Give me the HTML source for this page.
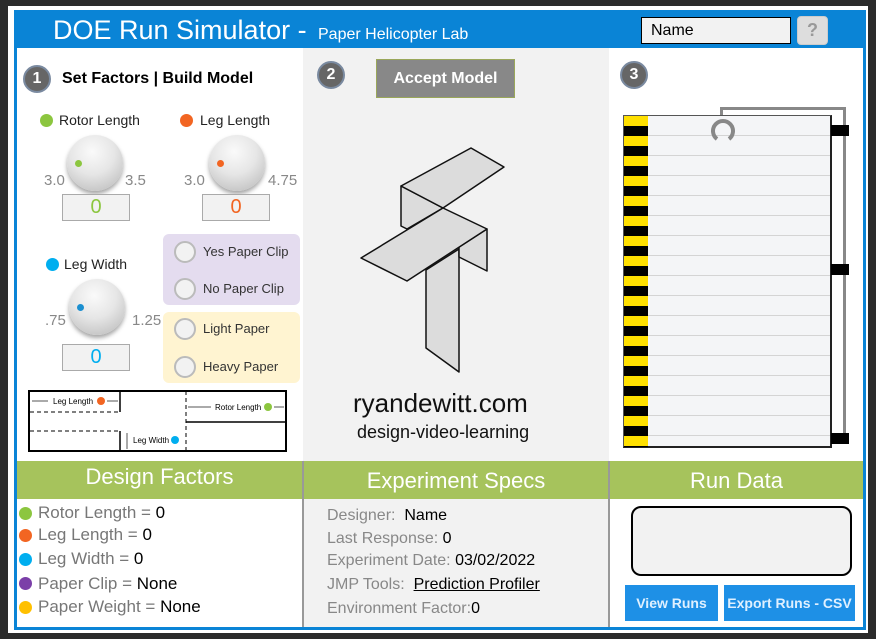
<!DOCTYPE html>
<html><head><meta charset="utf-8"><style>
*{margin:0;padding:0;box-sizing:border-box}
body{width:876px;height:639px;background:#2b2b2b;position:relative;overflow:hidden;font-family:"Liberation Sans",sans-serif}
.a{position:absolute}
.t{position:absolute;white-space:nowrap}
.dot{position:absolute;width:13px;height:13px;border-radius:50%}
.knob{position:absolute;width:56px;height:56px;border-radius:50%;background:radial-gradient(circle at 45% 30%,#fafafa 0%,#e6e6e6 45%,#b5b5b5 100%);box-shadow:0 3px 4px rgba(0,0,0,.35)}
.kd{position:absolute;width:7px;height:7px;border-radius:50%}
.vb{position:absolute;width:68px;height:27px;background:#f2f2f2;border:1px solid #aaa;text-align:center;font-size:20px;line-height:25px}
.rad{position:absolute;width:22px;height:22px;border-radius:50%;background:#f2f2f2;border:2px solid #bbb}
.sc{position:absolute;color:#888;font-size:15px}
.num{position:absolute;width:28px;height:28px;border-radius:50%;background:#666;border:2px solid #7a8aa0;color:#fff;font-weight:bold;font-size:16px;text-align:center;line-height:24px}
.df{position:absolute;left:38px;font-size:17px;color:#777}
.df b{font-weight:normal;color:#000}
.es{position:absolute;left:327px;font-size:16px;color:#888}
.es b{font-weight:normal;color:#000}
</style></head><body>
<div class="a" style="left:8px;top:6px;width:860px;height:627px;background:#fff"></div>
<div class="a" style="left:14px;top:10px;width:852px;height:620px;border:3px solid #0a84d6;background:#fff"></div>
<div class="a" style="left:14px;top:10px;width:852px;height:38px;background:#0a84d6"></div>
<div class="t" style="left:53px;top:15px;font-size:27px;color:#fff">DOE Run Simulator -</div>
<div class="t" style="left:318px;top:26px;font-size:16px;color:#fff">Paper Helicopter Lab</div>
<div class="a" style="left:641px;top:17px;width:150px;height:27px;background:#f2f2f2;border:1px solid #000;font-size:16px;padding-left:9px;line-height:25px">Name</div>
<div class="a" style="left:797px;top:16px;width:31px;height:29px;background:#ddd;border:1px solid #ccc;border-radius:4px;text-align:center;color:#999;font-weight:bold;font-size:18px;line-height:27px">?</div>

<div class="a" style="left:303px;top:48px;width:306px;height:579px;background:#f2f2f2"></div>
<div class="a" style="left:302px;top:461px;width:2px;height:166px;background:#999"></div>
<div class="a" style="left:608px;top:461px;width:2px;height:166px;background:#999"></div>
<div class="a" style="left:17px;top:461px;width:846px;height:38px;background:#a6c35c"></div>
<div class="a" style="left:302px;top:461px;width:2px;height:38px;background:#999"></div>
<div class="a" style="left:608px;top:461px;width:2px;height:38px;background:#999"></div>

<div class="num" style="left:23px;top:65px">1</div>
<div class="t" style="left:62px;top:70px;font-size:16px;font-weight:bold">Set Factors | Build Model</div>
<div class="dot" style="left:40px;top:114px;background:#8cc63f"></div>
<div class="t" style="left:59px;top:112px;font-size:14px;color:#222">Rotor Length</div>
<div class="dot" style="left:180px;top:114px;background:#f26522"></div>
<div class="t" style="left:200px;top:112px;font-size:14px;color:#222">Leg Length</div>
<div class="knob" style="left:67px;top:135px"><div class="kd" style="left:8px;top:25px;background:#8cc63f"></div></div>
<div class="knob" style="left:209px;top:135px"><div class="kd" style="left:8px;top:25px;background:#f26522"></div></div>
<div class="sc" style="left:44px;top:172px">3.0</div><div class="sc" style="left:125px;top:172px">3.5</div>
<div class="sc" style="left:184px;top:172px">3.0</div><div class="sc" style="left:268px;top:172px">4.75</div>
<div class="vb" style="left:62px;top:194px;color:#8cc63f">0</div>
<div class="vb" style="left:202px;top:194px;color:#f26522">0</div>
<div class="dot" style="left:46px;top:258px;background:#00aeef"></div>
<div class="t" style="left:64px;top:256px;font-size:14px;color:#222">Leg Width</div>
<div class="knob" style="left:69px;top:279px"><div class="kd" style="left:8px;top:25px;background:#1b8fd0"></div></div>
<div class="sc" style="left:45px;top:312px">.75</div><div class="sc" style="left:132px;top:312px">1.25</div>
<div class="vb" style="left:62px;top:344px;color:#00aeef">0</div>
<div class="a" style="left:163px;top:234px;width:137px;height:71px;background:#e4dcef;border-radius:6px"></div>
<div class="a" style="left:163px;top:312px;width:137px;height:71px;background:#fff4d1;border-radius:6px"></div>
<div class="rad" style="left:174px;top:241px"></div><div class="t" style="left:203px;top:244px;font-size:13px;color:#333">Yes Paper Clip</div>
<div class="rad" style="left:174px;top:278px"></div><div class="t" style="left:203px;top:281px;font-size:13px;color:#333">No Paper Clip</div>
<div class="rad" style="left:174px;top:318px"></div><div class="t" style="left:203px;top:321px;font-size:13px;color:#333">Light Paper</div>
<div class="rad" style="left:174px;top:356px"></div><div class="t" style="left:203px;top:359px;font-size:13px;color:#333">Heavy Paper</div>
<svg class="a" style="left:28px;top:390px" width="260" height="63">
<rect x="1" y="1" width="257" height="60" fill="#fff" stroke="#000" stroke-width="2"/>
<line x1="92" y1="1" x2="92" y2="22" stroke="#000" stroke-width="1.5"/>
<line x1="2" y1="22" x2="92" y2="22" stroke="#000" stroke-dasharray="4,3"/>
<line x1="2" y1="41" x2="92" y2="41" stroke="#000" stroke-dasharray="4,3"/>
<line x1="92" y1="41" x2="92" y2="62" stroke="#000" stroke-width="1.5"/>
<line x1="158" y1="1" x2="158" y2="62" stroke="#000" stroke-dasharray="4,3"/>
<line x1="158" y1="32" x2="258" y2="32" stroke="#000" stroke-width="1.5"/>
<text x="25" y="14" font-size="8" font-family="Liberation Sans">Leg Length</text>
<circle cx="73" cy="11" r="4" fill="#f26522"/>
<text x="187" y="20" font-size="8" font-family="Liberation Sans">Rotor Length</text>
<circle cx="240" cy="17" r="4" fill="#8cc63f"/>
<text x="105" y="53" font-size="8" font-family="Liberation Sans">Leg Width</text>
<circle cx="147" cy="50" r="4" fill="#00aeef"/>
<line x1="4" y1="11" x2="20" y2="11" stroke="#555"/><line x1="79" y1="11" x2="90" y2="11" stroke="#555"/>
<line x1="160" y1="17" x2="183" y2="17" stroke="#555"/><line x1="246" y1="17" x2="256" y2="17" stroke="#555"/>
<line x1="99" y1="43" x2="99" y2="59" stroke="#555"/>
</svg>

<div class="num" style="left:317px;top:61px">2</div>
<div class="a" style="left:376px;top:59px;width:139px;height:39px;background:#888;border:1px solid #9aa75a;color:#fff;font-weight:bold;font-size:16px;text-align:center;line-height:37px">Accept Model</div>
<svg class="a" style="left:0;top:0" width="876" height="639">
<g fill="#dcdcdc" stroke="#111" stroke-width="1.5" stroke-linejoin="round">
<polygon points="401,186 443,208 407,229 401,226"/>
<polygon points="401,186 471,148 504,167 443,208"/>
<polygon points="426,270 459,249 459,372 426,348"/>
<polygon points="459,247 487,229 487,271 459,257"/>
<polygon points="361,258 443,208 487,229 407,281"/>
</g>
</svg>
<div class="t" style="left:353px;top:388px;font-size:26px;color:#111">ryandewitt.com</div>
<div class="t" style="left:357px;top:422px;font-size:18px;color:#111">design-video-learning</div>

<div class="num" style="left:620px;top:61px">3</div>
<div class="a" style="left:720px;top:107px;width:126px;height:333px;border:3px solid #888;border-left:none;border-bottom:none"></div>
<div class="a" style="left:720px;top:107px;width:3px;height:12px;background:#888"></div>
<div class="a" style="left:623px;top:115px;width:209px;height:333px;background:#f4f5f7;border:1px solid #555;border-right:2px solid #222;border-bottom:2px solid #222;background-image:repeating-linear-gradient(to bottom,transparent 0,transparent 19px,#d4d4d4 19px,#d4d4d4 20px)"></div>
<div class="a" style="left:624px;top:116px;width:24px;height:331px;background:repeating-linear-gradient(to bottom,#ffe000 0,#ffe000 10px,#000 10px,#000 20px)"></div>
<div class="a" style="left:831px;top:125px;width:18px;height:11px;background:#000"></div>
<div class="a" style="left:831px;top:264px;width:18px;height:11px;background:#000"></div>
<div class="a" style="left:831px;top:433px;width:18px;height:11px;background:#000"></div>
<svg class="a" style="left:708px;top:116px" width="30" height="30"><path d="M9 23 A10 10 0 1 1 21 23" fill="none" stroke="#888" stroke-width="4"/></svg>

<div class="t" style="left:17px;top:464px;width:285px;text-align:center;font-size:22px;color:#fff">Design Factors</div>
<div class="t" style="left:304px;top:468px;width:304px;text-align:center;font-size:22px;color:#fff">Experiment Specs</div>
<div class="t" style="left:610px;top:468px;width:253px;text-align:center;font-size:22px;color:#fff">Run Data</div>
<div class="dot" style="left:19px;top:507px;background:#8cc63f"></div><div class="df" style="top:503px">Rotor Length = <b>0</b></div>
<div class="dot" style="left:19px;top:529px;background:#f26522"></div><div class="df" style="top:525px">Leg Length = <b>0</b></div>
<div class="dot" style="left:19px;top:553px;background:#00aeef"></div><div class="df" style="top:549px">Leg Width = <b>0</b></div>
<div class="dot" style="left:19px;top:577px;background:#7b3fa8"></div><div class="df" style="top:574px">Paper Clip = <b>None</b></div>
<div class="dot" style="left:19px;top:601px;background:#ffc000"></div><div class="df" style="top:597px">Paper Weight = <b>None</b></div>
<div class="es" style="top:507px">Designer:&nbsp; <b>Name</b></div>
<div class="es" style="top:530px">Last Response: <b>0</b></div>
<div class="es" style="top:552px">Experiment Date: <b>03/02/2022</b></div>
<div class="es" style="top:576px">JMP Tools:&nbsp; <b style="text-decoration:underline">Prediction Profiler</b></div>
<div class="es" style="top:600px">Environment Factor:<b>0</b></div>
<div class="a" style="left:631px;top:506px;width:221px;height:70px;background:#f2f2f2;border:2px solid #000;border-radius:10px"></div>
<div class="a" style="left:625px;top:585px;width:93px;height:36px;background:#1e90e6;color:#dff0ff;font-weight:bold;font-size:14px;text-align:center;line-height:36px">View Runs</div>
<div class="a" style="left:724px;top:585px;width:131px;height:36px;background:#1e90e6;color:#dff0ff;font-weight:bold;font-size:14px;text-align:center;line-height:36px">Export Runs - CSV</div>
</body></html>
